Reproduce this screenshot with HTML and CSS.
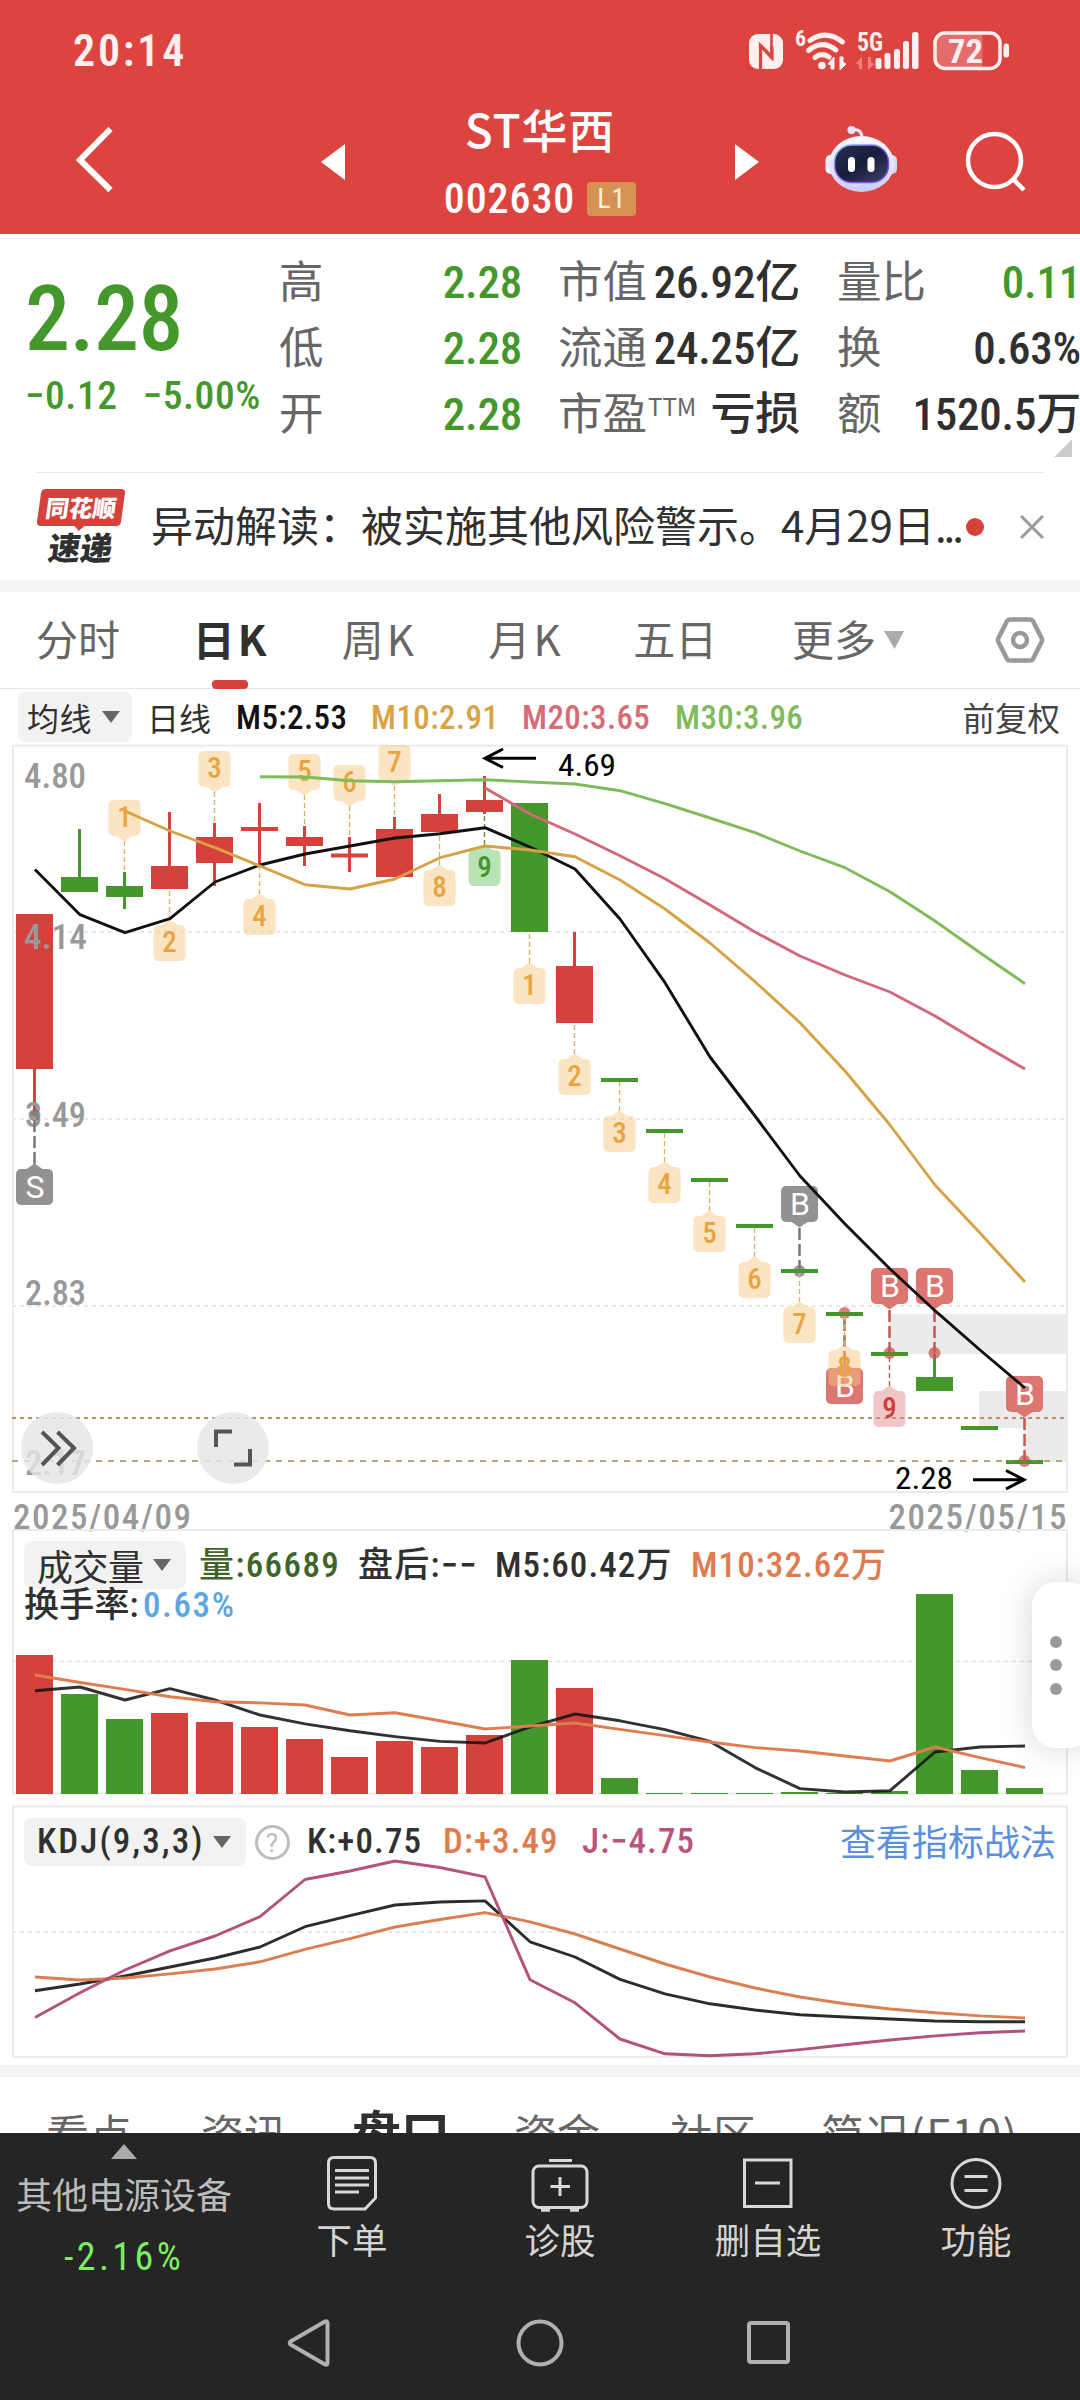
FILE: index.html
```
<!DOCTYPE html>
<html lang="zh-CN">
<head>
<meta charset="utf-8">
<title>ST华西 002630</title>
<link rel="stylesheet" href="styles.css">
</head>
<body>
<div class="screen">
  <header class="top">
    <div class="status">
      <span class="clock">20:14</span>
      <svg class="status-icons" viewBox="740 24 280 50" width="280" height="50">
        <rect x="749" y="34" width="34" height="35" rx="9" fill="#fff0f0"/>
        <path d="M760.500 69V45.500L772 57V46.500" fill="none" stroke="#dc4440" stroke-width="3.200"/>
        <path d="M771.500 34V58L760.500 46" fill="none" stroke="#dc4440" stroke-width="2.600"/>
        <text class="st" x="795" y="46" font-size="22" font-weight="700">6</text>
        <g fill="none" stroke="#fff0f0" stroke-width="5" stroke-linecap="round">
          <path d="M810 40.500Q826 29 842.500 42"/><path d="M808.500 50.500Q822 39 836 50"/><path d="M815 57.500Q822 52 829 57"/>
        </g>
        <circle cx="822" cy="65.500" r="3.800" fill="#fff0f0"/>
        <path d="M828 64L834 57V69H831V65ZM846 64L840 70V57H843V62Z" fill="#fff0f0" stroke="#fff0f0"/>
        <text class="st" x="857" y="51" font-size="25" font-weight="700" textLength="26" lengthAdjust="spacingAndGlyphs">5G</text>
        <path d="M856 63L862 57V69H859V65ZM874 64L868 70V57H871V62Z" fill="#f08080"/>
        <g fill="#fff0f0"><rect x="875.500" y="58" width="6" height="11" rx="2"/><rect x="884.500" y="53" width="6" height="16" rx="2.500"/><rect x="894" y="49" width="6" height="20" rx="2.500"/><rect x="903" y="41" width="6" height="28" rx="2.500"/><rect x="912" y="32" width="6.500" height="37" rx="2.500"/></g>
        <path d="M945 33H982.500V68H945Q936 68 936 59V42Q936 33 945 33Z" fill="#e46c6b"/>
        <rect x="935" y="33" width="65" height="35.500" rx="10" fill="none" stroke="#fff0f0" stroke-width="3.500"/>
        <rect x="1003.500" y="43.500" width="5.500" height="14" rx="2.500" fill="#fff0f0"/>
        <text class="st" x="948" y="62.500" font-size="34" font-weight="700" textLength="35" lengthAdjust="spacingAndGlyphs">72</text>
      </svg>
    </div>
    <div class="titlebar">
      <svg class="tb-back" viewBox="72 120 46 80" width="46" height="80"><path d="M110.500 129L80 160L110.500 190" fill="none" stroke="#fff" stroke-width="6"/></svg>
      <svg class="tb-prev" viewBox="0 0 24 36" width="24" height="36"><path d="M24 0V36L0 18Z" fill="#fff"/></svg>
      <div class="tb-title">
        <div class="stock-name">ST华西</div>
        <div class="stock-code"><span>002630</span><b class="level">L1</b></div>
      </div>
      <svg class="tb-next" viewBox="0 0 24 36" width="24" height="36"><path d="M0 0V36L24 18Z" fill="#fff"/></svg>
      <svg class="tb-robot" viewBox="825 126 72 66" width="72" height="66">
        <defs>
          <linearGradient id="shell" x1="0" y1="0" x2="0" y2="1"><stop offset="0" stop-color="#fbfaff"/><stop offset=".6" stop-color="#e2defa"/><stop offset="1" stop-color="#c9cdf4"/></linearGradient>
          <linearGradient id="visor" x1="0" y1="0" x2="1" y2="1"><stop offset="0" stop-color="#2b3050"/><stop offset=".5" stop-color="#171d3c"/><stop offset="1" stop-color="#41446a"/></linearGradient>
          <linearGradient id="rim" x1="0" y1="0" x2="1" y2="1"><stop offset="0" stop-color="#7fe0ee"/><stop offset=".5" stop-color="#8a5be8"/><stop offset="1" stop-color="#6c4fe0"/></linearGradient>
        </defs>
        <path d="M852 130Q861 128 862 137" fill="none" stroke="#eceafc" stroke-width="3"/>
        <circle cx="851.500" cy="130" r="4" fill="#e6e4fa"/>
        <rect x="825.500" y="155" width="12" height="19" rx="5" fill="#eef0fd"/><rect x="885" y="155" width="12" height="19" rx="5" fill="#d5dafa"/>
        <ellipse cx="861.500" cy="164" rx="32.500" ry="28" fill="url(#shell)"/>
        <rect x="834.500" y="145" width="54" height="37.500" rx="17" fill="url(#visor)" stroke="url(#rim)" stroke-width="1.500"/>
        <rect x="848" y="157" width="7" height="15" rx="3.500" fill="#fff"/><rect x="867.500" y="157" width="7" height="15" rx="3.500" fill="#fff"/>
      </svg>
      <svg class="tb-search" viewBox="962 128 68 68" width="68" height="68"><g fill="none" stroke="#fff" stroke-width="4.500"><circle cx="994.500" cy="160.500" r="26.500"/><path d="M1013.500 179.500L1024 190"/></g></svg>
    </div>
  </header>

  <section class="quote">
    <div class="price">
      <div class="price-now">2.28</div>
      <div class="price-diff"><span>−0.12</span><span>−5.00%</span></div>
    </div>
    <dl class="col c1"><dt>高</dt><dd class="down">2.28</dd><dt>低</dt><dd class="down">2.28</dd><dt>开</dt><dd class="down">2.28</dd></dl>
    <dl class="col c2"><dt>市值</dt><dd>26.92亿</dd><dt>流通</dt><dd>24.25亿</dd><dt>市盈<sup>TTM</sup></dt><dd>亏损</dd></dl>
    <dl class="col c3"><dt>量比</dt><dd class="down">0.11</dd><dt>换</dt><dd>0.63%</dd><dt>额</dt><dd>1520.5万</dd></dl>
    <i class="corner"></i>
  </section>

  <section class="news">
    <div class="logo"><span class="logo-top">同花顺</span><span class="logo-bottom">速递</span></div>
    <p class="news-text">异动解读：被实施其他风险警示。4月29日<span class="dots">...</span></p>
    <i class="dot"></i>
    <svg class="close" viewBox="0 0 24 24" width="24" height="24"><path d="M1 1L23 23M23 1L1 23" stroke="#999" stroke-width="3" fill="none"/></svg>
  </section>

  <nav class="tabs">
    <span class="tab t1">分时</span><span class="tab t2 on">日K</span><span class="tab t3">周K</span><span class="tab t4">月K</span><span class="tab t5">五日</span><span class="tab t6">更多</span>
    <svg class="more" viewBox="0 0 22 18" width="22" height="18"><path d="M1 0H21L11.500 18Z" fill="#aaa"/></svg>
    <svg class="hex" viewBox="0 0 50 50" width="50" height="50"><g fill="none" stroke="#999" stroke-width="4.500" stroke-linejoin="round"><path d="M15 4.500H35Q37 4.500 38 6L46.500 23Q47.500 25 46.500 27L38 44Q37 45.500 35 45.500H15Q13 45.500 12 44L3.500 27Q2.500 25 3.500 23L12 6Q13 4.500 15 4.500Z"/><circle cx="25" cy="25" r="7"/></g></svg>
  </nav>

  <div class="legend">
    <span class="pick">均线<i class="caret"></i></span>
    <span class="lg-name">日线</span>
    <span class="lg m5">M5:2.53</span><span class="lg m10">M10:2.91</span><span class="lg m20">M20:3.65</span><span class="lg m30">M30:3.96</span>
    <span class="lg-adj">前复权</span>
  </div>

  <section class="kline"><svg id="kline" viewBox="0 744 1080 752" width="1080" height="752"></svg></section>
  <div class="dates"><span>2025/04/09</span><span>2025/05/15</span></div>

  <section class="volume">
    <svg id="volume" class="plot" viewBox="0 1529 1080 270" width="1080" height="270"></svg>
    <div class="row v1">
      <span class="pick">成交量<i class="caret"></i></span>
      <span class="g w1">量:66689</span><span class="w2">盘后:−−</span><span class="w3">M5:60.42万</span><span class="o w4">M10:32.62万</span>
    </div>
    <div class="row v2"><span class="w5">换手率:</span><span class="b">0.63%</span></div>
  </section>

  <section class="kdj">
    <svg id="kdj" class="plot" viewBox="0 1805 1080 256" width="1080" height="256"></svg>
    <div class="row">
      <span class="pick">KDJ(9,3,3)<i class="caret"></i></span>
      <i class="help">?</i>
      <span class="k1">K:+0.75</span><span class="o k2">D:+3.49</span><span class="p k3">J:−4.75</span>
      <a class="link">查看指标战法</a>
    </div>
  </section>

  <nav class="subtabs"><span class="s1">看点</span><span class="s2">资讯</span><span class="s3 on">盘口</span><span class="s4">资金</span><span class="s5">社区</span><span class="s6">简况(F10)</span></nav>

  <footer class="bottom">
    <div class="actions">
      <div class="sector"><i class="up"></i><span class="sector-name">其他电源设备</span><span class="sector-chg">-2.16%</span></div>
      <div class="act"><svg viewBox="0 0 60 60" width="60" height="60"><g fill="none" stroke="#d8d8d8" stroke-width="3"><path d="M12 4.500H48Q53.500 4.500 53.500 10V45L43 56H12Q6.500 56 6.500 50.500V10Q6.500 4.500 12 4.500Z"/><path d="M13 17.500H47M13 25H47M13 32H47M13 39H37"/></g></svg><span>下单</span></div>
      <div class="act"><svg viewBox="0 0 60 60" width="60" height="60"><g fill="none" stroke="#d8d8d8" stroke-width="3"><rect x="3" y="13" width="54" height="41.500" rx="6"/><path d="M19 7.500H42M30 24V43M20.500 33.500H40"/><path d="M11 57H20M40 57H49" stroke-width="3.500"/></g></svg><span>诊股</span></div>
      <div class="act"><svg viewBox="0 0 60 60" width="60" height="60"><g fill="none" stroke="#d8d8d8" stroke-width="3"><rect x="6.500" y="7" width="46.500" height="46.500"/><path d="M17 30H42"/></g></svg><span>删自选</span></div>
      <div class="act"><svg viewBox="0 0 60 60" width="60" height="60"><g fill="none" stroke="#d8d8d8" stroke-width="3"><circle cx="30" cy="30.500" r="24"/><path d="M18.500 23.500H41.500M18.500 37.500H41.500"/></g></svg><span>功能</span></div>
    </div>
    <div class="sysbar">
      <svg viewBox="0 0 48 48" width="48" height="48"><path d="M3.500 22.500L38 2.500Q40.500 1.500 40.500 4.500V43.500Q40.500 46.500 38 45.500L3.500 25.500Q2 24 3.500 22.500Z" fill="none" stroke="#b0b0b0" stroke-width="4" stroke-linejoin="round"/></svg>
      <svg viewBox="0 0 48 48" width="48" height="48"><circle cx="24" cy="24" r="21.500" fill="none" stroke="#b0b0b0" stroke-width="4"/></svg>
      <svg viewBox="0 0 48 48" width="48" height="48"><rect x="4" y="4" width="39" height="39" rx="2" fill="none" stroke="#b0b0b0" stroke-width="4"/></svg>
    </div>
  </footer>
  <aside class="handle"><i></i><i></i><i></i></aside>
</div>
<script src="charts.js"></script>
</body>
</html>
```
FILE: styles.css
```
:root { --num: Roboto, "Noto Sans CJK SC", sans-serif; --cjk: "Noto Sans CJK SC", sans-serif; --ink: #303030; --down: #43972b; }
* { box-sizing: border-box; margin: 0; padding: 0; }
body { width: 1080px; height: 2400px; overflow: hidden; background: #fff; font-family: var(--cjk); color: var(--ink); }
svg { display: block; flex: none; }
i, b { font-style: normal; font-weight: 400; }
.screen { position: relative; width: 1080px; height: 2400px; overflow: hidden; display: flex; flex-direction: column; white-space: nowrap; }
.screen > * { flex: none; }

.top { height: 234px; background: #dc4440; color: #fff; }
.status { height: 98px; display: flex; justify-content: space-between; align-items: flex-start; padding: 24px 60px 0 73px; }
.clock { font: 600 44px/54px var(--num); font-stretch: 80%; letter-spacing: 2.8px; color: #fff0f0; }
.st { font-family: Roboto, sans-serif; font-stretch: 75%; fill: #fff0f0; }
.titlebar { height: 136px; position: relative; display: grid; grid-template-columns: 321px 24px 390px 24px 66px 72px 183px; align-items: start; }
.tb-back { grid-column: 1; grid-row: 1; margin: 22px 0 0 72px; }
.tb-prev { grid-column: 2; margin-top: 46px; }
.tb-title { grid-column: 3; display: flex; flex-direction: column; align-items: center; }
.stock-name { font-size: 46px; font-weight: 500; line-height: 60px; margin-top: 0; letter-spacing: .8px; }
.stock-code { height: 36px; margin-top: 23px; display: flex; align-items: center; gap: 12px; font: 500 42px/36px var(--num); font-stretch: 75%; letter-spacing: .9px; }
.level { width: 49px; height: 34px; border-radius: 4px; background: #d69154; color: #fff1dc; font-size: 28px; line-height: 34px; text-align: center; }
.tb-next { grid-column: 4; margin-top: 46px; }
.tb-robot { grid-column: 6; margin-top: 28px; }
.tb-search { grid-column: 7; margin: 30px 0 0 65px; }

.quote { position: relative; height: 238px; display: flex; }
.price { width: 281px; padding-left: 25px; color: var(--down); }
.price-now { margin-top: 38px; font: 500 90px/96px var(--num); font-stretch: 75%; letter-spacing: -.5px; }
.price-diff { margin-top: 6px; display: flex; gap: 25px; font: 500 39.500px/44px var(--num); font-stretch: 75%; letter-spacing: .6px; }
.col { display: grid; grid-template-columns: 0 1fr; grid-auto-rows: 66px; padding-top: 12px; font-size: 44.500px; line-height: 66px; }
.col dt { color: #666; font-weight: 400; }
.col dd { text-align: right; font: 500 45px/66px var(--num); font-stretch: 75%; padding-top: 4px; letter-spacing: -.2px; }
.col .down { color: var(--down); }
.c1 { width: 243px; margin-left: -2px; }
.c2 { width: 242px; margin-left: 36px; }
.c3 { width: 243px; margin-left: 37px; }
.c3 dd { padding-top: 4px; margin-right: -1px; }
sup { font: 400 24px/24px var(--cjk); vertical-align: 14px; margin-left: 1px; }
.corner { position: absolute; right: 8px; top: 205px; width: 18px; height: 18px; background: linear-gradient(135deg, transparent 50%, #ccc 50%); }

.news { height: 108px; margin: 0 36px; border-top: 1px solid #e8e8e8; display: flex; align-items: center; position: relative; }
.logo { width: 90px; height: 74px; display: flex; flex-direction: column; align-items: center; margin-top: -2px; }
.logo-top { position: relative; width: 84px; height: 37px; background: #d5423b; border-radius: 4px; transform: skewX(-8deg); color: #fff; font-size: 23.500px; font-weight: 900; line-height: 36px; text-align: center; }
.logo-top::after { content: ""; position: absolute; left: 37px; top: 36px; border: 6px solid transparent; border-top-color: #d5423b; border-bottom: 0; }
.logo-bottom { margin-top: 4px; font-size: 32px; font-weight: 900; line-height: 32px; transform: skewX(-8deg); }
.news-text { margin-left: 25px; width: 815px; font-size: 42px; line-height: 60px; margin-top: -5px; }
.dots { letter-spacing: -3px; }
.dot { width: 18px; height: 18px; border-radius: 50%; background: #d5423b; }
.close { margin-left: 36px; }

.tabs { height: 109px; border-top: 12px solid #f4f4f4; border-bottom: 1px solid #e6e6e6; display: flex; align-items: center; position: relative; font-size: 42px; line-height: 60px; color: #666; padding: 0 35px 0 36px; }
.tab { position: relative; top: -2px; }
.t1 { width: 157px; } .t2 { width: 149px; } .t3 { width: 147px; } .t4 { width: 145px; } .t5 { width: 159px; } .t6 { width: 91px; }
.t2, .t3, .t4 { letter-spacing: 3px; }
.tab.on { color: var(--ink); font-weight: 700; }
.tab.on::after { content: ""; position: absolute; left: 19px; top: 72px; width: 36px; height: 9px; border-radius: 4px; background: #d5423b; }
.hex { margin-left: 90px; }

.legend { height: 55px; display: flex; align-items: center; padding: 0 20px 0 18px; font: 500 33px/40px var(--num); font-stretch: 75%; letter-spacing: .4px; }
.pick { display: flex; align-items: center; justify-content: space-between; background: #f2f2f2; border-radius: 8px; }
.caret { border: 9px solid transparent; border-top: 12px solid #666; border-bottom: 0; }
.legend .pick { width: 114px; height: 50px; padding: 0 12px 0 9px; font: 400 32px/50px var(--cjk); }
.lg-name { margin-left: 15px; width: 89px; font-family: var(--cjk); font-weight: 400; letter-spacing: 0; font-size: 32px; }
.legend .lg { padding-top: 2px; }
.m5 { width: 135px; color: #111; } .m10 { width: 151px; color: #d9a344; } .m20 { width: 153px; color: #d76b74; } .m30 { color: #80bb5b; }
.lg-adj { margin-left: auto; font: 400 32.500px/40px var(--cjk); letter-spacing: 0; color: #444; }

.kline { height: 752px; }
.kline, .volume, .kdj { position: relative; }
.dates { height: 33px; display: flex; justify-content: space-between; padding: 5px 12px 0 13px; font: 500 35px/33px var(--num); font-stretch: 75%; letter-spacing: 1.500px; color: #999; }
.volume { height: 276px; }
.kdj { height: 260px; }
.plot { position: absolute; left: 0; top: 0; }
.row { position: relative; display: flex; align-items: center; height: 48px; margin-left: 24px; font: 500 35px/48px var(--num); font-stretch: 75%; letter-spacing: 1.100px; }
.row .pick { height: 48px; padding: 0 15px 0 13px; }
.v1 { top: 12px; }
.v1 span { padding-top: 2px; }
.v1 .pick { width: 162px; padding-top: 0; font: 400 36px/44px var(--cjk); letter-spacing: -.5px; align-items: center; }
.v2 { top: 5px; }
.g { color: #3f6427; } .o { color: #e07b4f; } .b { color: #5ea6de; letter-spacing: 1.600px; } .p { color: #b8557d; }
.w1 { margin-left: 13px; width: 159px; letter-spacing: 1.400px; } .w2 { width: 137px; letter-spacing: 1.300px; } .w3 { width: 196px; } .w5 { width: 119px; letter-spacing: .2px; }
.kdj .row { top: 13px; margin-right: 24px; }
.kdj .pick { width: 222px; letter-spacing: 2.100px; }
.help { width: 35px; height: 35px; margin: 0 17px 0 9px; border: 3px solid #bdbdbd; border-radius: 50%; color: #bbb; font: 400 26px/30px Roboto, sans-serif; text-align: center; }
.k1 { width: 136px; } .k2 { width: 139px; }
.link { margin: -5px 0 0 auto; font: 400 36px/48px var(--cjk); letter-spacing: 0; color: #5b8fdd; }

.subtabs { height: 68px; border-top: 12px solid #f4f4f4; overflow: hidden; display: flex; align-items: flex-start; padding: 24px 0 0 46px; font-size: 43px; line-height: 62px; color: #666; }
.s1 { width: 155px; } .s2 { width: 151px; } .s3 { width: 162px; } .s4 { width: 156px; } .s5 { width: 151px; } .s6 { letter-spacing: 1.600px; }
.subtabs .on { color: var(--ink); font-weight: 700; font-size: 49px; line-height: 60px; }

.bottom { height: 267px; background: #252525; color: #d4d4d4; }
.actions { height: 162px; display: grid; grid-template-columns: 248px repeat(4, 208px); }
.sector { display: flex; flex-direction: column; align-items: center; padding-top: 11px; }
.up { border: 13px solid transparent; border-bottom: 15px solid #aaa; border-top: 0; }
.sector-name { margin-top: 12px; font-size: 36px; line-height: 44px; color: #bbb; }
.sector-chg { margin-top: 20px; font: 400 38px/44px var(--num); font-stretch: 86%; letter-spacing: 3.400px; color: #7cf060; }
.act { display: flex; flex-direction: column; align-items: center; padding-top: 20px; font-size: 35.500px; line-height: 44px; }
.act span { margin-top: 4px; }
.sysbar { display: flex; justify-content: center; gap: 181px; padding: 24px 0 0 0; }

.handle { position: absolute; left: 1032px; top: 1582px; width: 60px; height: 166px; border-radius: 24px; background: #fff; box-shadow: 0 0 34px rgba(0,0,0,.17); display: flex; flex-direction: column; justify-content: center; gap: 11.500px; padding-left: 17.500px; }
.handle i { width: 12px; height: 12px; border-radius: 50%; background: #999; }
svg text { font-family: Roboto, "Noto Sans CJK SC", sans-serif; font-stretch: 75%; }
.axis { font-size: 35px; font-weight: 500; fill: #999; }
.note { font-size: 31px; fill: #000; }
.flag { font-size: 29px; font-weight: 500; text-anchor: middle; }
svg .trade { font-size: 32px; fill: #fff; text-anchor: middle; font-stretch: 90%; }
```
FILE: charts.js
```
const X = i => 35 + 45 * i;
const RED = '#d5423b', GREEN = '#43972b';
const rect = (x, y, w, h, fill, extra = '') => `<rect x="${x}" y="${y}" width="${w}" height="${h}" fill="${fill}" ${extra}/>`;
const seg = (x1, y1, x2, y2, stroke, w, dash = '') => `<path d="M${x1} ${y1}L${x2} ${y2}" stroke="${stroke}" stroke-width="${w}" stroke-dasharray="${dash}" fill="none"/>`;
const curve = (from, ys, stroke, w = 2.9) => `<polyline points="${ys.map((y, k) => X(from + k) + ',' + y).join(' ')}" fill="none" stroke="${stroke}" stroke-width="${w}" stroke-linejoin="round"/>`;
const label = (x, y, t, cls, len) => `<text class="${cls}" x="${x}" y="${y}"${len ? ` textLength="${len}" lengthAdjust="spacingAndGlyphs"` : ''}>${t}</text>`;

/* daily candles: colour, wick top, body top, body bottom, wick bottom */
const candles = [
  ['r',914,914,1069,1112],['g',829,877,892,892],['g',872,886,897,909],['r',812,866,889,889],['r',823,837,863,886],
  ['r',803,827,831,864],['r',826,837,846,866],['r',837,853.5,857.5,872],['r',817,829,877,877],['r',794,814,832,832],
  ['r',776,800,812,814],['g',803,803,932,932],['r',932,966,1023,1023],['g',1078,1078,1082,1082],['g',1129,1129,1133,1133],
  ['g',1178,1178,1182,1182],['g',1224,1224,1228,1228],['g',1269,1269,1273,1273],['g',1312,1312,1316,1316],['g',1352,1352,1356,1356],
  ['g',1354,1377,1391,1391],['g',1426,1426,1430,1430],['g',1460,1460,1464,1464]];

/* nine-turn marks: index, digit, box top, pointer side, dash end, palette */
const gold = ['#f6c782', '#e8a441', '#dcb266'], lime = ['#6fc46a', '#43972b', '#43972b'], rose = ['#e08a8a', '#cc403c', '#b8504c'];
const turns = [
  [2,1,800,'d',872,gold],[4,3,751,'d',823,gold],[6,5,754,'d',826,gold],[7,6,765,'d',837,gold],[8,7,745,'d',817,gold],
  [3,2,925,'u',889,gold],[5,4,899,'u',866,gold],[9,8,870,'u',832,gold],[10,9,850,'u',814,lime],[11,1,968,'u',932,gold],
  [12,2,1059,'u',1023,gold],[13,3,1116,'u',1082,gold],[14,4,1167,'u',1133,gold],[15,5,1216,'u',1182,gold],[16,6,1262,'u',1228,gold],
  [17,7,1307,'u',1273,gold],[18,8,1350,'u',1316,gold],[19,9,1391,'u',1356,rose]];

/* trade marks: index, letter, box top, pointer side, dot y, colour */
const trades = [
  [0,'S',1169,'u',1115,'#929292','#777'],[17,'B',1186,'d',1271,'#929292','#777'],[18,'B',1368,'u',1313,'#dd7571','#cc5450'],
  [19,'B',1268,'d',1353,'#dd7571','#cc5450'],[20,'B',1268,'d',1353,'#dd7571','#cc5450'],[22,'B',1376,'d',1461,'#dd7571','#cc5450']];

function pin(cx, top, w, h, side, fill, extra) {
  const p = side === 'd' ? `M${cx - 8} ${top + h}L${cx} ${top + h + 5.5}L${cx + 8} ${top + h}Z` : `M${cx - 8} ${top}L${cx} ${top - 5.5}L${cx + 8} ${top}Z`;
  return `<g fill="${fill}" ${extra}><rect x="${cx - w / 2}" y="${top}" width="${w}" height="${h}" rx="5"/><path d="${p}"/></g>`;
}

let s = '';
s += rect(890, 1314, 178, 40, '#ebebeb') + rect(979, 1391, 89, 37, '#ebebeb') + rect(1024, 1428, 44, 34, '#ebebeb');
for (const y of [931.7, 1119, 1306]) s += seg(12, y, 1068, y, '#e8e8e8', 2, '4 4');
s += rect(13, 745.7, 1054, 746.3, 'none', 'stroke="#ebebeb" stroke-width="2"');
s += label(24, 788, '4.80', 'axis', 62);
candles.forEach(([c, t, a, b, z], i) => {
  const f = c === 'r' ? RED : GREEN;
  s += seg(X(i) - .5, t, X(i) - .5, z, f, 3) + rect(X(i) - 19, a, 37, b - a, f);
});
s += label(24, 949, '4.14', 'axis', 63) + label(25, 1127, '3.49', 'axis', 61) + label(25, 1305, '2.83', 'axis', 61) + label(25, 1475, '2.17', 'axis', 61);
s += seg(12, 1418, 1068, 1418, '#c08e62', 2, '4 4') + seg(12, 1461, 1068, 1461, '#bda377', 2, '6 6');
for (const [i, ch, top, side, dot, c, d] of trades) {
  const x = X(i) - .5;
  s += seg(x, side === 'd' ? top + 42 : top - 5, x, dot, d, 2.5, '12 4');
  s += `<circle cx="${x}" cy="${dot}" r="6" fill="${d}" opacity=".75"/>`;
  s += pin(x, top, 37, 36, side, c, '') + label(x + .5, top + 28.5, ch, 'trade');
  if (dot > 1200 && i !== 20) s += rect(x - 18.5, candles[i][2], 37, 4, GREEN, 'opacity=".75"');
}
for (const [i, n, top, side, end, [bg, fg, ln]] of turns) {
  const x = X(i) - .5;
  s += seg(x, side === 'd' ? top + 41 : top - 5, x, end, ln, 1.3, '5 3');
  s += pin(x, top, 32, 36, side, bg, 'opacity=".48"') + `<text class="flag" x="${x}" y="${top + 27}" fill="${fg}">${n}</text>`;
}
s += curve(5, [776.7,777,780.7,781.7,780.7,779.7,782,784,790.7,803.7,818,832.7,851,867.7,891.7,921,952.7,983.7], '#80bb5b');
s += curve(10, [788,814,834,855.7,878.7,905,932,956,975,992,1016,1043,1069], '#d2687a');
s += curve(0, [869.5,914.7,932.7,918.7,882,865,854,846,838,833.7,827.7,847,869,919,982.7,1057,1116,1176,1224,1269,1310.7,1350,1388], '#111');
s += curve(2, [811,831,847.7,866,884.7,889,879,857.7,846,850,856.7,880,909,943,981.7,1022.7,1071,1125,1185,1233,1282], '#d6a245');
s += `<g fill="none" stroke="#000" stroke-width="3"><path d="M536 758.300H485M503 749L485 758.300L503 767.500"/><path d="M973 1479.700H1024M1006 1470.500L1024 1479.700L1006 1489"/></g>`;
s += label(558, 776, '4.69', 'note', 58) + label(895, 1489, '2.28', 'note', 58);
s += `<g fill="#e6e6e6" opacity=".82"><circle cx="57" cy="1448" r="36"/><circle cx="233" cy="1448" r="36"/></g>`;
s += `<g fill="none" stroke="#555" stroke-width="4"><path d="M42 1432L58.500 1448L42 1465M57.500 1432L74 1448L57.500 1465"/><path d="M216 1447V1431.500H232M250 1449V1464.500H234"/></g>`;
document.getElementById('kline').innerHTML = s;

const vol = [1655,1694,1719,1713,1722,1727,1739,1757,1741,1747,1735,1660,1688,1778,1793,1793,1793,1792,1793,1791,1594,1770,1788];
const vc = 'rggrrrrrrrrgrgggggggggg';
s = rect(13, 1530, 1054, 263.5, 'none', 'stroke="#ebebeb" stroke-width="2"') + seg(12, 1661.3, 1068, 1661.3, '#d8d8d8', 1, '4 4');
vol.forEach((y, i) => { s += rect(X(i) - 19, y, 37, 1794 - y, vc[i] === 'r' ? RED : GREEN); });
s += curve(0, [1690.8,1687,1700,1688.7,1700,1715,1723.9,1730.8,1736.6,1741.4,1743,1727,1714,1720.8,1729.7,1741.4,1767.6,1788.6,1792,1790.7,1752,1747,1746], 'rgba(20,20,20,.87)');
s += curve(0, [1675,1682.5,1689.4,1696.7,1701.8,1702.9,1705,1715,1712.8,1720.8,1729,1726,1723,1729.4,1735.6,1742,1747.6,1751,1756,1761,1747,1757.6,1767.6], '#df7d50');
document.getElementById('volume').innerHTML = s;

s = rect(13, 1806.5, 1054, 250.5, 'none', 'stroke="#ebebeb" stroke-width="2"') + seg(12, 1932, 1068, 1932, '#e8e8e8', 2, '4 4');
s += curve(0, [1990.7,1984,1976,1967,1958,1947,1926.7,1915.7,1905,1902,1900.9,1941.8,1957,1979.4,1993.8,2003.8,2010,2014.8,2017,2019,2021,2021.7,2021.7], '#2c2c2c');
s += curve(0, [1977,1980,1978,1973.9,1969,1961.8,1949.4,1938.7,1927,1919.5,1912.6,1921.9,1934,1949,1964,1977,1988,1997,2003.8,2009,2012.8,2015.9,2018], '#da7f54');
s += curve(0, [2017.6,1992.8,1970,1950.8,1936,1916.7,1879.5,1871,1861,1867.5,1876.8,1979.7,2002.8,2039,2053.8,2055.8,2053.8,2049.6,2044.8,2040,2035.9,2032.8,2031], '#b3527a');
document.getElementById('kdj').innerHTML = s;
```
